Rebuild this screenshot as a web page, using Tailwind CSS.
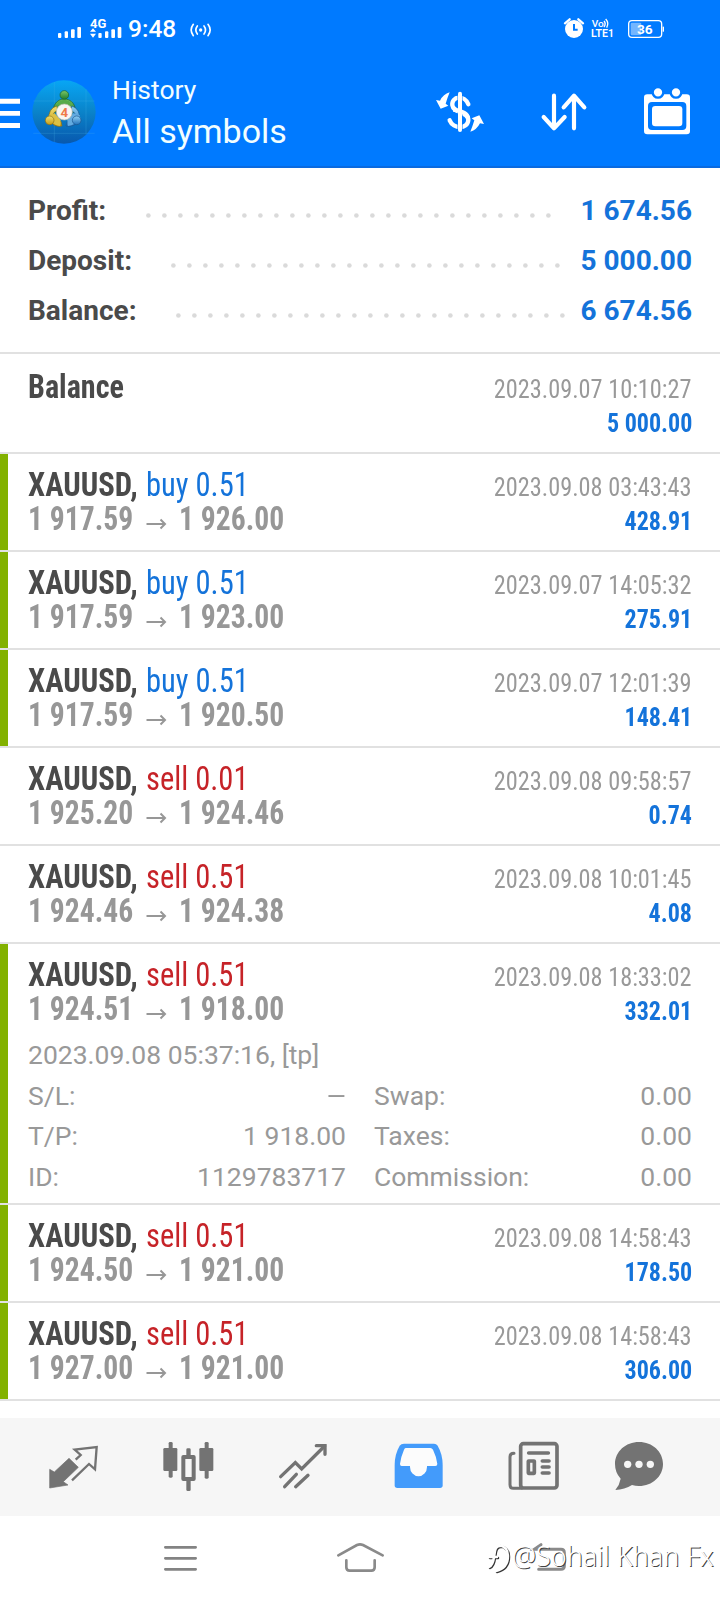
<!DOCTYPE html>
<html lang="en">
<head>
<meta charset="utf-8">
<title>History</title>
<script src="https://cdn.jsdelivr.net/npm/@tailwindcss/browser@4"></script>
</head>
<body class="bg-white">
<div class="relative flex h-[1600px] w-[720px] flex-col overflow-hidden bg-white font-['Roboto',sans-serif]">

  <header class="flex h-[168px] flex-col border-b-2 border-[#0a6adf] bg-[#007aff] text-white">
    <!-- status bar -->
    <div class="flex h-14 items-start justify-between">
      <div class="flex">
        <svg class="h-14 w-32" viewBox="0 0 384 168" fill="#fff">
          <rect x="174" y="99" width="10" height="15" rx="3"/><rect x="194" y="94" width="10" height="20" rx="3"/><rect x="213" y="88" width="11" height="26" rx="3"/><rect x="232" y="81" width="11" height="33" rx="3"/>
          <rect x="295" y="99" width="10" height="15" rx="3"/><rect x="315" y="94" width="10" height="20" rx="3"/><rect x="334" y="88" width="11" height="26" rx="3"/><rect x="353" y="81" width="11" height="33" rx="3"/>
          <path d="M270 95l9-10 9 10zM270 101h18l-9 12z"/>
          <text x="270" y="83" font-size="36" font-weight="700" textLength="49" lengthAdjust="spacingAndGlyphs" font-family="Roboto">4G</text>
        </svg>
        <span class="text-[24.500px] leading-[58px] font-medium">9:48</span>
        <svg class="h-14 w-12" viewBox="526 0 144 168" fill="none" stroke="#fff" stroke-width="5" stroke-linecap="round">
          <circle cx="600" cy="90" r="5" fill="#fff" stroke="none"/>
          <path d="M590 78q-9 12 0 24M610 78q9 12 0 24M578 73q-13 17 0 34M622 73q13 17 0 34"/>
        </svg>
      </div>
      <svg class="mr-10 h-14 w-[120px]" viewBox="600 0 360 168" fill="#fff" font-family="Roboto" font-weight="700">
        <circle cx="642" cy="87" r="27"/>
        <path d="M615 70l14-12M669 70l-14-12" stroke="#fff" stroke-width="7" stroke-linecap="round"/>
        <path d="M642 72v17h11" fill="none" stroke="#007aff" stroke-width="6"/>
        <text x="695" y="81" font-size="28" font-weight="500" textLength="36" lengthAdjust="spacingAndGlyphs">Vo</text>
        <path d="M732 63q7 8 0 18M737 57q11 12 3 26" fill="none" stroke="#fff" stroke-width="4"/>
        <text x="693" y="110" font-size="33" font-weight="600" textLength="69" lengthAdjust="spacingAndGlyphs">LTE1</text>
        <rect x="806" y="62" width="99" height="50" rx="10" fill="none" stroke="#fff" stroke-width="4"/>
        <rect x="812" y="68" width="32" height="38" rx="4" fill="#fff" fill-opacity=".45"/>
        <rect x="908" y="80" width="4" height="15"/>
        <text x="831" y="102" font-size="40" textLength="47" lengthAdjust="spacingAndGlyphs">36</text>
      </svg>
    </div>
    <!-- title bar -->
    <div class="flex h-28">
      <svg class="h-28 w-7 shrink-0" viewBox="0 168 84 336" fill="#fff"><path d="M0 296h60v15H0zM0 333h60v14H0zM0 369h60v15H0z"/></svg>
      <svg class="h-28 w-[84px] shrink-0" viewBox="84 168 252 336">
        <defs>
          <linearGradient id="disc" x1="0" y1="0" x2="0" y2="1"><stop offset="0" stop-color="#08a6f4"/><stop offset=".5" stop-color="#0a83c9"/><stop offset="1" stop-color="#0858ae"/></linearGradient>
          <linearGradient id="gr" x1="0" y1="0" x2="0" y2="1"><stop offset="0" stop-color="#7cc768"/><stop offset="1" stop-color="#1f7d2c"/></linearGradient>
          <linearGradient id="ye" x1="0" y1="0" x2="0" y2="1"><stop offset="0" stop-color="#f0df70"/><stop offset="1" stop-color="#c79b17"/></linearGradient>
          <linearGradient id="bl" x1="0" y1="0" x2="0" y2="1"><stop offset="0" stop-color="#8fd0f5"/><stop offset="1" stop-color="#2273bd"/></linearGradient>
        </defs>
        <circle cx="192" cy="336" r="95" fill="url(#disc)"/>
        <path d="M163 246v180M258 268v136M100 303h184M100 400h184" stroke="#4fb7ea" stroke-opacity=".35" stroke-width="2"/>
        <path d="M161 338a33 33 0 1 1 64 0l-14-4a19 19 0 1 0-36 0z" fill="url(#gr)" stroke="#17602a" stroke-width="2"/>
        <path d="M170 318a31 31 0 1 0 16 60l-3-14a17 17 0 1 1-9-32z" fill="url(#ye)" stroke="#8a6d14" stroke-width="2"/>
        <path d="M216 318a31 31 0 1 1-18 60l4-14a17 17 0 1 0 10-32z" fill="url(#bl)" stroke="#1b568f" stroke-width="2"/>
        <path d="M172 308q20-18 42 0l-6 12h-30z" fill="#58ab4a"/>
        <path d="M146 346q2 26 34 32l2-18-18-20z" fill="#dcc044"/>
        <path d="M240 346q-4 26-36 32l-2-18 18-20z" fill="#63abe0"/>
        <circle cx="193" cy="285" r="13" fill="url(#gr)" stroke="#17602a" stroke-width="2"/>
        <circle cx="149" cy="361" r="13" fill="url(#ye)" stroke="#8a6d14" stroke-width="2"/>
        <circle cx="230" cy="361" r="13" fill="url(#bl)" stroke="#1b568f" stroke-width="2"/>
        <circle cx="193" cy="336" r="24" fill="#f8f6f2" stroke="#b9b9a9" stroke-width="2"/>
        <text x="193" y="350" text-anchor="middle" font-size="40" font-weight="700" fill="#ef7a48" font-family="Roboto">4</text>
      </svg>
      <div class="flex w-[296px] flex-col pt-4 text-[#f2feff]">
        <span class="text-[26.5px] leading-9">History</span>
        <span class="text-[34px] leading-[46px]">All symbols</span>
      </div>
      <svg class="h-28 w-[105px]" viewBox="144 168 315 336" fill="#fff">
        <path d="M325 313C314 284 274 288 277 316C280 340 325 334 325 360C323 388 280 388 269 361" fill="none" stroke="#fff" stroke-width="13" stroke-linecap="round"/>
        <path d="M300 280v111" stroke="#007aff" stroke-width="15"/>
        <path d="M280 329q40 6 44 24" fill="none" stroke="#fff" stroke-width="13"/>
        <path d="M300 281v109" stroke="#fff" stroke-width="12" stroke-linecap="round"/>
        <path d="M228 300l12 2Q250 282 269 277Q262 294 257 311L265 317L242 326ZM372 372l-12-2Q350 390 331 395Q338 378 343 361L335 355L358 346Z"/>
      </svg>
      <svg class="h-28 w-[105px]" viewBox="459 168 315 336" fill="none" stroke="#fff" stroke-width="12.500" stroke-linecap="round" stroke-linejoin="round"><path d="M582 287v97M551 351l31 34 32-34M642 385v-97M611 322l31-35 31 35"/></svg>
      <svg class="h-28 w-[102px]" viewBox="774 168 306 336" fill="#fff">
        <rect x="852" y="283" width="138" height="120" rx="10"/>
        <rect x="864" y="306" width="115" height="84" rx="12" fill="#007aff"/>
        <rect x="876" y="318" width="91" height="61" rx="10"/>
        <g stroke="#007aff" stroke-width="7"><circle cx="894" cy="277" r="16"/><circle cx="948" cy="277" r="16"/></g>
      </svg>
    </div>
  </header>

  <!-- totals -->
  <section id="totals" class="flex h-[186px] flex-col border-b-2 border-[#e1e1e1] pt-[17px] pr-7 pl-7 text-[28px] leading-[52px] font-bold text-[#4a4a4a]"></section>

  <!-- deals -->
  <main id="deals" class="flex flex-col"></main>

  <!-- tabs -->
  <nav class="mt-[17px] flex h-[98px] shrink-0 bg-[#f6f6f6]">
    <svg class="h-[98px] w-[120px]" viewBox="0 84 360 294">
      <path d="M149 238l14 8 44-41 28 27-45 43 14 10-55 9z" fill="#737373" stroke="#737373" stroke-width="2" stroke-linejoin="round"/>
      <path d="M227 209l15-14-18-16 66-8-5 67-18-16-51 49" fill="none" stroke="#737373" stroke-width="7"/>
    </svg>
    <svg class="h-[98px] w-[120px]" viewBox="360 84 360 294" fill="#737373">
      <rect x="490" y="174" width="42" height="69" rx="4"/><rect x="506" y="156" width="12" height="107" rx="4"/>
      <rect x="598" y="174" width="42" height="69" rx="4"/><rect x="614" y="156" width="12" height="110" rx="4"/>
      <rect x="559" y="175" width="13" height="25" rx="4"/><rect x="559" y="268" width="13" height="35" rx="4"/>
      <rect x="550" y="201" width="31" height="66" fill="none" stroke="#737373" stroke-width="12" stroke-linejoin="round"/>
    </svg>
    <svg class="h-[98px] w-[120px]" viewBox="720 84 360 294" fill="none" stroke="#737373" stroke-width="10" stroke-linecap="round">
      <path d="M842 260l44-42 19 19 69-69M854 290l35-37M887 290l37-34"/><path d="M949 167h26v26" stroke-width="10"/>
    </svg>
    <svg class="h-[98px] w-[120px]" viewBox="0 84 360 294">
      <path d="M132 161h90q7 0 11 6 15 26 15 58v61q0 8-8 8H112q-8 0-8-8v-61q0-32 15-58 4-6 13-6z" fill="#439bfb"/>
      <path d="M137 174h74q5 0 8 5 10 20 13 43 0 6-6 6h-25v3a25 27 0 0 1-51 0v-3h-25q-5 0-5-6 3-23 12-43 2-5 5-5z" fill="#fcfcfc"/>
    </svg>
    <svg class="h-[98px] w-[120px]" viewBox="360 84 360 294" fill="none" stroke="#737373" stroke-linecap="round">
      <rect x="482" y="161" width="109" height="133" rx="8" stroke-width="11"/>
      <path d="M462 190q-12 0-12 10v84q0 11 10 11h25" stroke-width="9"/>
      <path d="M506 189h59M547 213h20M547 231h20M547 249h20" stroke-width="11"/>
      <rect x="505" y="213" width="18" height="37" rx="1" stroke-width="11"/>
    </svg>
    <svg class="h-[98px] w-[120px]" viewBox="720 84 360 294">
      <path d="M837 156c40 0 72 29 72 66s-32 66-72 66q-11 0-21-3-22 14-50 15 13-16 16-34-17-18-17-44c0-37 32-66 72-66z" fill="#737373"/>
      <g fill="#f6f6f6"><circle cx="803" cy="223" r="11"/><circle cx="837" cy="223" r="11"/><circle cx="871" cy="223" r="11"/></g>
    </svg>
  </nav>

  <!-- system navigation -->
  <div class="flex h-[84px] shrink-0">
    <svg class="h-[84px] w-60" viewBox="0 378 720 252" stroke="#838383" stroke-width="8" stroke-linecap="round"><path d="M496 472h91M496 505h91M496 538h91"/></svg>
    <svg class="h-[84px] w-60" viewBox="720 378 720 252" fill="none" stroke="#8a8a8a" stroke-width="8" stroke-linecap="round"><path d="M1015 496l56-31q9-4 18 0l59 31M1039 511v21q0 10 10 10h65q10 0 10-10v-21"/></svg>
    <svg class="h-[84px] w-60" viewBox="360 378 720 252" fill="none" stroke="#8a8a8a" stroke-width="9" stroke-linecap="round"><path d="M543 464l-20 14h80q10 0 10 10v40q0 10-10 10h-67"/></svg>
  </div>

  <!-- embossed signature -->
  <div class="absolute top-[1534px] left-[484px] flex items-start">
    <svg class="h-11 w-7 drop-shadow-[1px_1px_0px_#333]" viewBox="484 1535 28 44" fill="none" stroke="#fff" stroke-width="2.500" stroke-linecap="round"><path d="M489 1568q4-2 5-10l1-6q1-5 5-5M489 1558h8M499 1546q9 2 9 11 0 12-12 15"/></svg>
    <span class="text-[27px] leading-11 font-light whitespace-nowrap text-white [text-shadow:1px_1px_0px_#444] font-['Noto_Sans',sans-serif]">@Sohail Khan Fx</span>
  </div>
</div>

<script>
const totals = [
  ['Profit:', '1 674.56', 118, 26],
  ['Deposit:', '5 000.00', 143, 25],
  ['Balance:', '6 674.56', 148, 25],
];
document.getElementById('totals').innerHTML = totals.map(([label, value, start, dots]) => `
  <div class="flex h-[50px]">
    <span class="shrink-0" style="width:${start}px">${label}</span>
    <svg class="h-[50px] shrink-0" style="width:${dots * 16}px" fill="#dadada">${
      Array.from({length: dots}, (_, i) => `<circle cx="${2.4 + i * 16}" cy="30.500" r="2.300"/>`).join('')}</svg>
    <span class="ml-auto text-[#1473da]">${value}</span>
  </div>`).join('');

const deals = [
  {balance: true, time: '2023.09.07 10:10:27', profit: '5 000.00'},
  {side: 'buy', lot: '0.51', open: '1 917.59', close: '1 926.00', time: '2023.09.08 03:43:43', profit: '428.91', mark: true},
  {side: 'buy', lot: '0.51', open: '1 917.59', close: '1 923.00', time: '2023.09.07 14:05:32', profit: '275.91', mark: true},
  {side: 'buy', lot: '0.51', open: '1 917.59', close: '1 920.50', time: '2023.09.07 12:01:39', profit: '148.41', mark: true},
  {side: 'sell', lot: '0.01', open: '1 925.20', close: '1 924.46', time: '2023.09.08 09:58:57', profit: '0.74'},
  {side: 'sell', lot: '0.51', open: '1 924.46', close: '1 924.38', time: '2023.09.08 10:01:45', profit: '4.08'},
  {side: 'sell', lot: '0.51', open: '1 924.51', close: '1 918.00', time: '2023.09.08 18:33:02', profit: '332.01', mark: true,
    opened: '2023.09.08 05:37:16, [tp]',
    details: [['S/L:', '—', 'Swap:', '0.00'], ['T/P:', '1 918.00', 'Taxes:', '0.00'], ['ID:', '1129783717', 'Commission:', '0.00']]},
  {side: 'sell', lot: '0.51', open: '1 924.50', close: '1 921.00', time: '2023.09.08 14:58:43', profit: '178.50', mark: true},
  {side: 'sell', lot: '0.51', open: '1 927.00', close: '1 921.00', time: '2023.09.08 14:58:43', profit: '306.00', mark: true},
];
const price = t => `<span class="origin-left scale-x-[0.897]">${t}</span>`;
const left = d => d.balance
  ? `<div class="flex"><span class="origin-left scale-x-[0.912] font-bold text-[#4a4a4a]">Balance</span></div>`
  : `<div class="flex"><div class="flex w-[117.500px]"><b class="origin-left scale-x-[0.93] font-bold text-[#4a4a4a]">XAUUSD,</b></div><span class="origin-left scale-x-[0.925] ${d.side === 'buy' ? 'text-[#1473da]' : 'text-[#c62328]'}">${d.side} ${d.lot}</span></div>
     <div class="flex font-bold text-[#979797]">
       <div class="flex w-[118px]">${price(d.open)}</div>
       <svg class="h-[34px] w-[33px]" viewBox="0 0 33 34" fill="none" stroke="#979797" stroke-width="2"><path d="M.5 22H19M14.500 17.500l4.500 4.500-4.500 4.500"/></svg>
       ${price(d.close)}
     </div>`;
const more = d => !d.details ? '' : `
  <div class="flex flex-col text-[26.500px] leading-[40.500px] text-[#999]">
    <div>${d.opened}</div>
    ${d.details.map(r => `<div class="flex justify-between"><div class="flex w-[318px] justify-between"><span>${r[0]}</span><span class="${r[1] === '—' ? 'inline-block origin-right scale-x-[0.92]' : ''}">${r[1]}</span></div><div class="flex w-[318px] justify-between"><span>${r[2]}</span><span>${r[3]}</span></div></div>`).join('')}
  </div>`;
document.getElementById('deals').innerHTML = deals.map(d => `
  <article class="flex border-b-2 border-[#e1e1e1] ${d.balance ? 'h-[100px] pt-0.5' : d.details ? 'h-[261px]' : 'h-[98px]'}">
    <div class="w-2 shrink-0 ${d.mark ? 'bg-[#82b100]' : ''}"></div>
    <div class="flex grow flex-col pr-7 pl-5">
      <div class="flex h-[91px] shrink-0 justify-between font-['Roboto_Condensed','Roboto',sans-serif] leading-[34px]">
        <div class="flex flex-col pt-[13.500px] text-[33px]">${left(d)}</div>
        <div class="flex flex-col items-end pt-4 text-[26px] text-[#999]">
          <span class="origin-right scale-x-[0.935]">${d.time}</span><span class="origin-right scale-x-[0.925] font-bold text-[#1473da]">${d.profit}</span>
        </div>
      </div>${more(d)}
    </div>
  </article>`).join('');
</script>
</body>
</html>
